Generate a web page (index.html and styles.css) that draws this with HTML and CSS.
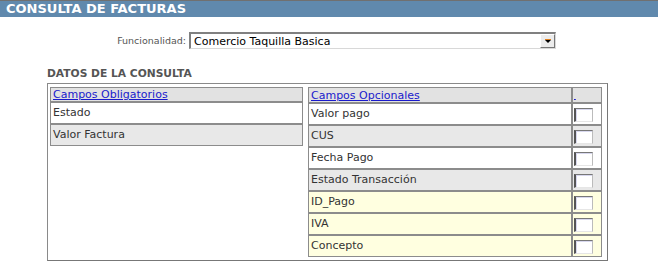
FILE: index.html
```html
<!DOCTYPE html>
<html>
<head>
<meta charset="utf-8">
<link rel="stylesheet" href="styles.css">
</head>
<body>
<div class="titlebar">CONSULTA DE FACTURAS</div>
<div class="filter">
  <span class="flabel">Funcionalidad:</span>
  <div class="select">
    <span class="seltext">Comercio Taquilla Basica</span>
    <span class="selbtn"><span class="arrow"></span></span>
  </div>
</div>
<div class="section">DATOS DE LA CONSULTA</div>
<table class="outer">
  <tr>
    <td class="ocell left">
      <table class="grid">
        <tr class="head"><td><a href="#">Campos Obligatorios</a></td></tr>
        <tr class="white"><td>Estado</td></tr>
        <tr class="gray"><td>Valor Factura</td></tr>
      </table>
    </td>
    <td class="ocell right">
      <table class="grid">
        <tr class="head"><td><a href="#">Campos Opcionales</a></td><td class="chk"><a href="#" class="blank">&#8202;&#8202;</a></td></tr>
        <tr class="white"><td>Valor pago</td><td class="chk"><span class="cb"></span></td></tr>
        <tr class="gray"><td>CUS</td><td class="chk"><span class="cb"></span></td></tr>
        <tr class="white"><td>Fecha Pago</td><td class="chk"><span class="cb"></span></td></tr>
        <tr class="gray"><td>Estado Transacción</td><td class="chk"><span class="cb"></span></td></tr>
        <tr class="yellow"><td>ID_Pago</td><td class="chk"><span class="cb"></span></td></tr>
        <tr class="yellow"><td>IVA</td><td class="chk"><span class="cb"></span></td></tr>
        <tr class="yellow"><td>Concepto</td><td class="chk"><span class="cb"></span></td></tr>
      </table>
    </td>
  </tr>
</table>
</body>
</html>
```
FILE: styles.css
```css
html, body {
  margin: 0;
  padding: 0;
  background: #fff;
  font-family: "DejaVu Sans", Verdana, sans-serif;
}
.titlebar {
  height: 16px;
  border-top: 1px solid #707070;
  background: #6089ad;
  color: #fff;
  font-weight: bold;
  font-size: 13px;
  line-height: 15px;
  padding-left: 6px;
}
.filter {
  display: flex;
  align-items: center;
  margin-top: 15px;
  padding-left: 114px;
  height: 17px;
}
.flabel {
  font-size: 9.5px;
  color: #555;
  width: 72px;
  text-align: right;
  margin-right: 3px;
}
.select {
  box-sizing: border-box;
  width: 367px;
  height: 17px;
  border-top: 2px solid #808080;
  border-left: 2px solid #808080;
  border-right: 1px solid #d8d8d8;
  border-bottom: 1px solid #d8d8d8;
  display: flex;
  align-items: center;
  justify-content: space-between;
  background: #fff;
}
.seltext {
  font-size: 11px;
  color: #000;
  padding-left: 3px;
}
.selbtn {
  box-sizing: border-box;
  width: 15px;
  height: 14px;
  background: #ececec;
  border-top: 1px solid #fff;
  border-left: 1px solid #fff;
  border-right: 1px solid #777;
  border-bottom: 1px solid #777;
  display: flex;
  align-items: center;
  justify-content: center;
}
.arrow {
  width: 0;
  height: 0;
  border-left: 3px solid transparent;
  border-right: 3px solid transparent;
  border-top: 3px solid #000;
  box-shadow: 0 -1px 0 #e08020;
}
.section {
  margin: 19px 0 0 47px;
  font-size: 10.7px;
  font-weight: bold;
  color: #555;
  height: 12px;
  line-height: 12px;
}
.outer {
  margin: 3px 0 0 47px;
  width: 561px;
  border-collapse: separate;
  border-spacing: 0;
  border: 1px solid #8a8a8a;
  border-right-color: #777;
  border-bottom-color: #777;
  height: 178px;
}
.ocell {
  vertical-align: top;
  padding: 0;
}
.ocell.left {
  width: 253px;
  padding: 3px 0 0 2px;
}
.ocell.right {
  padding: 3px 5px 0 5px;
}
.grid {
  border-collapse: separate;
  border-spacing: 0;
  width: 100%;
  font-size: 11px;
  color: #333;
}
.grid td {
  border: 1px solid #8c8c8c;
  padding: 0 0 0 2px;
  height: 20px;
  line-height: 14px;
  vertical-align: middle;
  white-space: nowrap;
}
.grid tr.head td {
  height: 13px;
  line-height: 13px;
  background: #e2e2e2;
}
.grid tr.white td { background: #fff; }
.grid tr.gray td { background: #e8e8e8; }
.grid tr.yellow td { background: #ffffe0; }
.grid a {
  color: #1a1acc;
  text-decoration: underline;
}
.grid td.chk {
  width: 27px;
  padding: 0 0 0 1px;
}
.grid tr.head td.chk {
  vertical-align: bottom;
}
.blank { font-size: 9px; }
.cb {
  display: block;
  box-sizing: border-box;
  width: 19px;
  height: 14px;
  margin-top: 2px;
  background: #fff;
  border-top: 1px solid #777;
  border-left: 2px solid #555;
  border-right: 1px solid #bbb;
  border-bottom: 1px solid #e6e6e6;
  box-shadow: inset 1px 1px 0 #d8d8ee;
}
```
